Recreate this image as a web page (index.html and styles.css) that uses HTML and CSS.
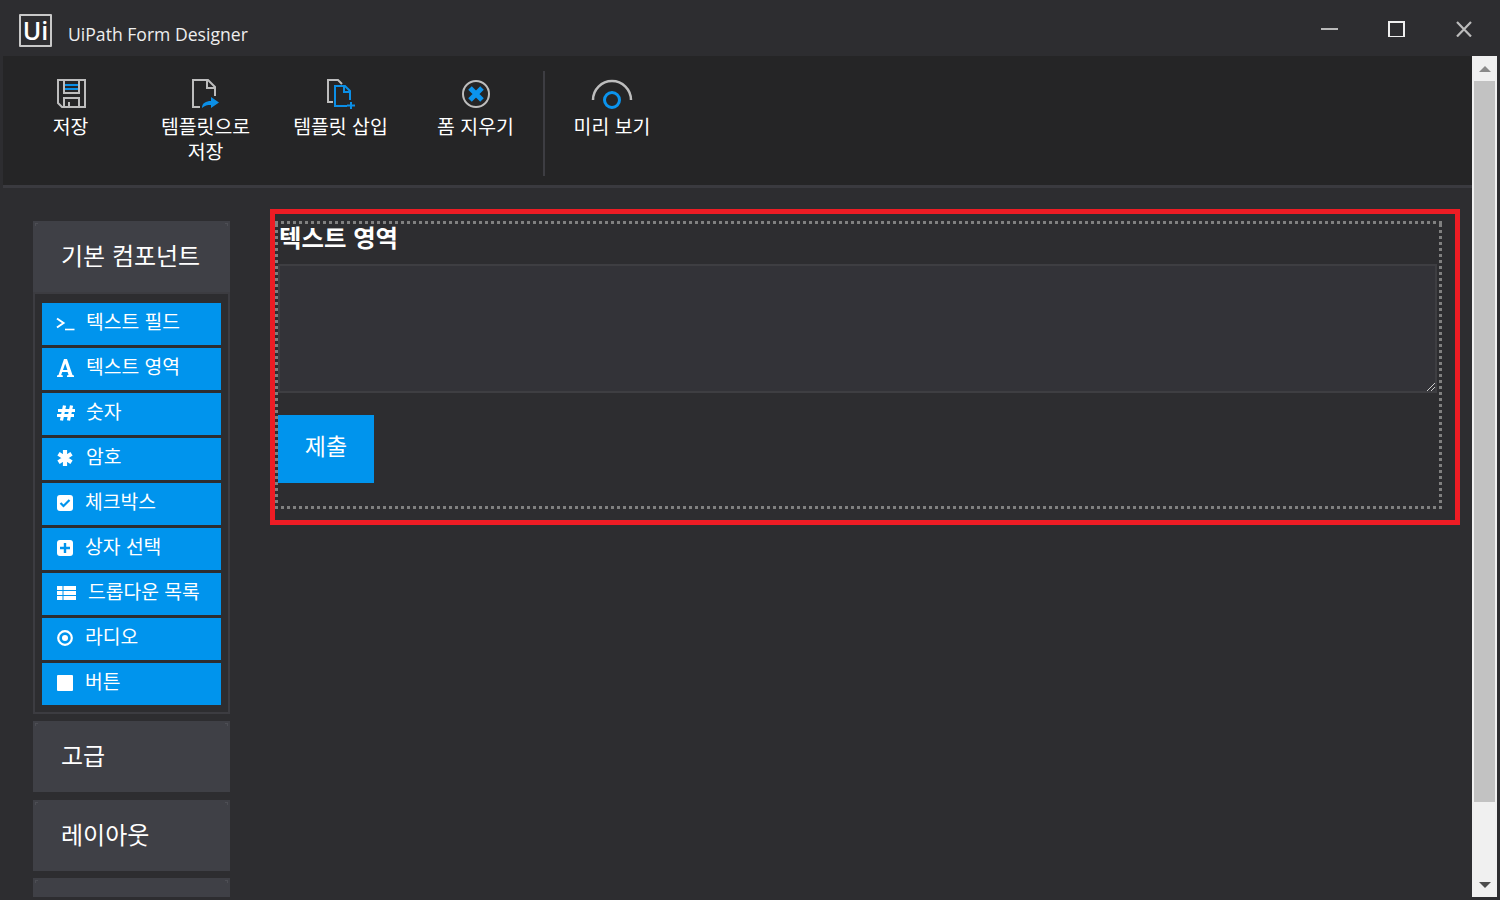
FILE: index.html
```html
<!DOCTYPE html>
<html lang="ko">
<head>
    <meta charset="UTF-8">
    <title>UiPath Form Designer</title>
    <link rel="stylesheet" href="styles.css">
</head>

<body>
    <!-- 제목 표시줄 -->
    <header class="titlebar">
        <div class="logo">Ui</div>
        <div class="app-title">UiPath Form Designer</div>
        <div class="win-buttons">
            <svg width="18" height="18" viewBox="0 0 18 18"><path d="M1 10h17" stroke="#ddd" stroke-width="1.600" fill="none"/></svg>
            <svg width="18" height="18" viewBox="0 0 18 18"><rect x="2" y="3" width="15" height="15" stroke="#eee" stroke-width="2" fill="none"/></svg>
            <svg width="18" height="18" viewBox="0 0 18 18"><path d="M3 3l14 14.500M17 3L3 17.500" stroke="#bbb" stroke-width="2.200" fill="none"/></svg>
        </div>
    </header>

    <div class="window-body">
        <div class="content">
            <!-- 도구 모음 -->
            <nav class="toolbar">
                <div class="tool">
                    <svg width="33" height="32" viewBox="0 0 33 32">
                        <path d="M4 2h27v27H8l-4-4z" fill="none" stroke="#bdbdbd" stroke-width="2"/>
                        <path d="M10 2v13h15V2" fill="none" stroke="#bdbdbd" stroke-width="2"/>
                        <path d="M11 7h13M11 11h13" stroke="#0b8fe6" stroke-width="2"/>
                        <path d="M10 29V20h15v9M15 29v-5" fill="none" stroke="#bdbdbd" stroke-width="2"/>
                    </svg>
                    <span>저장</span>
                </div>
                <div class="tool">
                    <svg width="33" height="32" viewBox="0 0 33 32">
                        <path d="M11 29H4V2h15l7 7v9M18 2v8h8" fill="none" stroke="#bdbdbd" stroke-width="2"/>
                        <path d="M13 30c0-5 4-7 9-7v-4l8 5.500-8 5.500v-3c-4 0-6 .5-9 3z" fill="#0b8fe6"/>
                    </svg>
                    <span>템플릿으로<br>저장</span>
                </div>
                <div class="tool">
                    <svg width="33" height="32" viewBox="0 0 33 32">
                        <path d="M9 24H4V2h10l4 4" fill="none" stroke="#bdbdbd" stroke-width="2"/>
                        <path d="M23 28H11V8h10l5 5v9M20 8v6h6" fill="none" stroke="#0b8fe6" stroke-width="2"/>
                        <path d="M27 24v7M23 27.500h8" stroke="#0b8fe6" stroke-width="2"/>
                    </svg>
                    <span>템플릿 삽입</span>
                </div>
                <div class="tool">
                    <svg width="33" height="32" viewBox="0 0 33 32">
                        <circle cx="17" cy="16" r="13" fill="none" stroke="#bdbdbd" stroke-width="2"/>
                        <path d="M11 10l12 12M23 10L11 22" stroke="#0b94ee" stroke-width="5"/>
                    </svg>
                    <span>폼 지우기</span>
                </div>
                <div class="tool-divider"></div>
                <div class="tool tool-preview">
                    <svg width="42" height="32" viewBox="0 0 42 32">
                        <path d="M2 22a19 19 0 0 1 38 0" fill="none" stroke="#bdbdbd" stroke-width="2.500"/>
                        <circle cx="21" cy="22" r="7.500" fill="none" stroke="#0b94ee" stroke-width="3"/>
                    </svg>
                    <span>미리 보기</span>
                </div>
            </nav>

            <main class="workspace">
                <!-- 구성 요소 목록 -->
                <aside class="sidebar">
                    <div class="section-head">기본 컴포넌트</div>
                    <div class="comp-panel">
                        <div class="comp">
                            <svg width="20" height="18" viewBox="0 0 20 18"><path d="M1 4.500l6.500 4.500L1 13.500" fill="none" stroke="#fff" stroke-width="2"/><path d="M9 15.500h9.500" stroke="#fff" stroke-width="1.600"/></svg>
                            <span>텍스트 필드</span>
                        </div>
                        <div class="comp">
                            <svg width="20" height="18" viewBox="0 0 20 18"><path d="M1 18v-1.500l1.500-.5L8 0h3l5.500 16 1.500.5V18h-7v-1.500l1.600-.4-1-3H6.200l-1 3 1.600.4V18zM7 11h4.400L9.200 4.500z" fill="#fff" fill-rule="evenodd"/></svg>
                            <span>텍스트 영역</span>
                        </div>
                        <div class="comp">
                            <svg width="20" height="18" viewBox="0 0 20 18"><path d="M8.500 1.500L5.500 16.500M15.500 1.500l-3 15M2 6.500h17M1 11.500h17" stroke="#fff" stroke-width="3.200" fill="none"/></svg>
                            <span>숫자</span>
                        </div>
                        <div class="comp">
                            <svg width="20" height="18" viewBox="0 0 20 18"><path d="M9 1v16M2.500 4.800l13 8.400M15.500 4.800l-13 8.400" stroke="#fff" stroke-width="4.200" fill="none"/></svg>
                            <span>암호</span>
                        </div>
                        <div class="comp comp-tight">
                            <svg width="18" height="18" viewBox="0 0 18 18"><rect x="1" y="1" width="16" height="16" rx="3" fill="#fff"/><path d="M4.500 9l3 3 6-6" fill="none" stroke="#0094ed" stroke-width="2.200"/></svg>
                            <span>체크박스</span>
                        </div>
                        <div class="comp comp-tight">
                            <svg width="18" height="18" viewBox="0 0 18 18"><rect x="1" y="1" width="16" height="16" rx="3" fill="#fff"/><path d="M9 4v10M4 9h10" fill="none" stroke="#0094ed" stroke-width="2.400"/></svg>
                            <span>상자 선택</span>
                        </div>
                        <div class="comp comp-list">
                            <svg width="20" height="18" viewBox="0 0 20 18"><path d="M1 2h5.500v4H1zM7.500 2H20v4H7.500zM1 7h5.500v4H1zM7.500 7H20v4H7.500zM1 12h5.500v4H1zM7.500 12H20v4H7.500z" fill="#fff"/></svg>
                            <span>드롭다운 목록</span>
                        </div>
                        <div class="comp comp-tight">
                            <svg width="18" height="18" viewBox="0 0 18 18"><circle cx="9" cy="9" r="6.800" fill="none" stroke="#fff" stroke-width="2.200"/><circle cx="9" cy="9" r="3" fill="#fff"/></svg>
                            <span>라디오</span>
                        </div>
                        <div class="comp comp-tight">
                            <svg width="18" height="18" viewBox="0 0 18 18"><rect x="1" y="1" width="16" height="16" rx="1" fill="#fff"/></svg>
                            <span>버튼</span>
                        </div>
                    </div>
                    <div class="section-head section-gap">고급</div>
                    <div class="section-head section-gap-wide">레이아웃</div>
                    <div class="section-head section-gap section-last"></div>
                </aside>

                <!-- 폼 미리 보기 -->
                <section class="canvas-outer">
                    <div class="canvas-drop">
                        <div class="field-label">텍스트 영역</div>
                        <div class="textarea">
                            <svg class="resize-grip" width="9" height="9" viewBox="0 0 9 9"><path d="M1 9l8-8M5 9l4-4" stroke="#ccc" stroke-width="1" fill="none"/></svg>
                        </div>
                        <div class="submit-btn">제출</div>
                    </div>
                </section>
            </main>
        </div>

        <!-- 스크롤 막대 -->
        <div class="scrollbar">
            <div class="arrow-up"></div>
            <div class="thumb"></div>
            <div class="arrow-down"></div>
        </div>
    </div>
</body>

</html>
```

FILE: styles.css
```css
/* 기본 */
html, body {
    margin: 0;
    padding: 0;
    height: 900px;
    overflow: hidden;
}

body {
    background-color: #2d2d30;
    color: #fff;
    font-family: "Noto Sans CJK KR", "Open Sans", sans-serif;
}

/* 제목 표시줄 */
.titlebar {
    height: 56px;
    display: flex;
    align-items: center;
    box-sizing: border-box;
    padding: 0 28px 0 19px;
}

.logo {
    width: 33px;
    height: 33px;
    box-sizing: border-box;
    border: 2px solid #c8c8c8;
    border-radius: 1px;
    font-family: "Open Sans", sans-serif;
    font-weight: 600;
    font-size: 25px;
    line-height: 28px;
    text-align: center;
    margin-top: 5px;
}

.app-title {
    margin: 12px 0 0 16px;
    font-family: "Open Sans", sans-serif;
    font-size: 17.600px;
    color: #eee;
}

.win-buttons {
    margin-left: auto;
    display: flex;
    gap: 49px;
}

/* 본문 */
.window-body {
    display: flex;
    height: 841px;
    padding: 0 3px;
}

.content {
    flex: 1;
    min-width: 0;
}

/* 도구 모음 */
.toolbar {
    height: 129px;
    display: flex;
    background-color: #252526;
    border-bottom: 3px solid #3a3a3f;
}

.tool {
    width: 135px;
    display: flex;
    flex-direction: column;
    align-items: center;
    padding-top: 22px;
    font-size: 19.400px;
    line-height: 25px;
    text-align: center;
}

.tool svg {
    margin-bottom: 3px;
}

.tool-preview {
    width: 134px;
}

.tool-divider {
    width: 2px;
    height: 105px;
    margin-top: 15px;
    background-color: #3d3d42;
}

/* 작업 영역 */
.workspace {
    display: flex;
    align-items: flex-start;
    padding-left: 30px;
}

.sidebar {
    width: 197px;
    padding-top: 33px;
    flex-shrink: 0;
}

.section-head {
    position: relative;
    height: 71px;
    box-sizing: border-box;
    padding: 0 0 4px 28px;
    background-color: #3f4046;
    font-size: 24px;
    line-height: 67px;
}

/* 머리글 모서리 표시 */
.section-head::before,
.section-head::after {
    content: "";
    position: absolute;
    top: 2px;
    width: 2px;
    height: 2px;
    border-top: 1px solid #4d4e54;
}

.section-head::before {
    left: 2px;
    border-left: 1px solid #4d4e54;
}

.section-head::after {
    right: 2px;
    border-right: 1px solid #4d4e54;
}

.section-gap {
    margin-top: 7px;
}

.section-gap-wide {
    margin-top: 8px;
}

.section-last {
    height: 19px;
}

.comp-panel {
    box-sizing: border-box;
    height: 422px;
    border: 2px solid #3c3c41;
    padding: 9px 7px;
    display: flex;
    flex-direction: column;
    gap: 3px;
}

.comp {
    height: 42px;
    flex-shrink: 0;
    display: flex;
    align-items: center;
    background-color: #0094ed;
    padding-left: 14px;
    font-size: 19.300px;
    box-sizing: border-box;
}

.comp svg {
    flex-shrink: 0;
    margin-bottom: 3px;
}

.comp span {
    margin-left: 10px;
    padding-bottom: 6px;
}

.comp-tight span {
    margin-left: 11px;
}

.comp-list span {
    margin-left: 12px;
}

/* 폼 영역 */
.canvas-outer {
    flex: 1;
    box-sizing: border-box;
    margin: 21px 12px 0 40px;
    height: 316px;
    border: 5px solid #ed1c24;
    padding: 7px 13px 11px 0;
}

/* 네모 점선 테두리 */
.canvas-drop {
    height: 100%;
    box-sizing: border-box;
    padding: 3px;
    background-image:
        repeating-linear-gradient(90deg, #808080 0 3px, transparent 3px 6px),
        repeating-linear-gradient(90deg, #808080 0 3px, transparent 3px 6px),
        repeating-linear-gradient(0deg, #808080 0 3px, transparent 3px 6px),
        repeating-linear-gradient(0deg, #808080 0 3px, transparent 3px 6px);
    background-size: 100% 3px, 100% 3px, 3px 100%, 3px 100%;
    background-position: left top, left bottom, left top, right top;
    background-repeat: no-repeat;
}

.field-label {
    font-size: 24.400px;
    font-weight: bold;
    line-height: 25px;
    height: 40px;
    padding-left: 1px;
}

.textarea {
    position: relative;
    height: 129px;
    box-sizing: border-box;
    margin-right: 2px;
    background-color: #333338;
    border: 2px solid #3e3e42;
}

.resize-grip {
    position: absolute;
    right: 0;
    bottom: 0;
}

.submit-btn {
    width: 96px;
    height: 68px;
    margin-top: 22px;
    background-color: #0094ed;
    font-size: 23px;
    line-height: 60px;
    text-align: center;
}

/* 스크롤 막대 */
.scrollbar {
    width: 25px;
    flex-shrink: 0;
    background-color: #f0f0f0;
    display: flex;
    flex-direction: column;
    align-items: center;
}

.arrow-up {
    width: 0;
    height: 0;
    margin-top: 10px;
    border-left: 6px solid transparent;
    border-right: 6px solid transparent;
    border-bottom: 6px solid #8a8a8a;
}

.thumb {
    width: 21px;
    height: 721px;
    margin-top: 9px;
    background-color: #c2c2c2;
}

.arrow-down {
    width: 0;
    height: 0;
    margin-top: 80px;
    border-left: 6px solid transparent;
    border-right: 6px solid transparent;
    border-top: 6px solid #4d4d4d;
}
```
